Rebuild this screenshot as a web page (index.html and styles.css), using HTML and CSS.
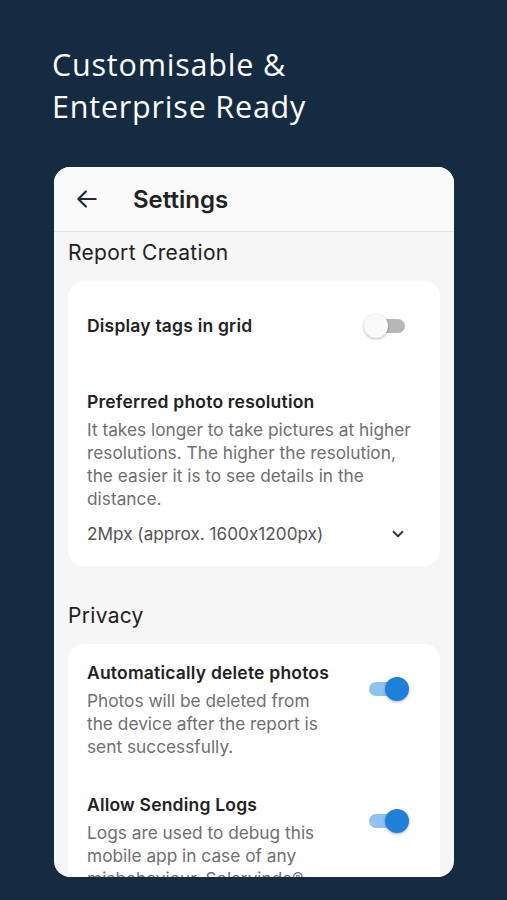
FILE: index.html
```html
<!DOCTYPE html>
<html>
<head>
<meta charset="utf-8">
<link rel="stylesheet" href="styles.css">
</head>
<body>
<div class="hero">
  <h1 class="hero-title">Customisable &amp;<br>Enterprise Ready</h1>
</div>
<div class="phone">
  <div class="appbar">
    <svg class="back" width="26" height="26" viewBox="0 0 24 24"><path d="M20 12H4.5M11 5l-7 7 7 7" fill="none" stroke="#1b2b3c" stroke-width="2" stroke-linecap="round" stroke-linejoin="round"/></svg>
    <span class="appbar-title">Settings</span>
  </div>
  <div class="content">
    <div class="section-title">Report Creation</div>
    <div class="card">
      <div class="row row-simple">
        <div class="row-text"><div class="item-title">Display tags in grid</div></div>
        <div class="switch off"><span class="track"></span><span class="thumb"></span></div>
      </div>
      <div class="row row-block">
        <div class="item-title">Preferred photo resolution</div>
        <div class="item-desc">It takes longer to take pictures at higher resolutions. The higher the resolution, the easier it is to see details in the distance.</div>
        <div class="select">
          <span>2Mpx (approx. 1600x1200px)</span>
          <svg width="18" height="18" viewBox="0 0 24 24"><path d="M6 9l6 6 6-6" fill="none" stroke="#333" stroke-width="2.4" stroke-linecap="round" stroke-linejoin="round"/></svg>
        </div>
      </div>
    </div>
    <div class="section-title section-gap">Privacy</div>
    <div class="card">
      <div class="row row-toggle">
        <div class="row-text">
          <div class="item-title">Automatically delete photos</div>
          <div class="item-desc narrow">Photos will be deleted from the device after the report is sent successfully.</div>
        </div>
        <div class="switch on"><span class="track"></span><span class="thumb"></span></div>
      </div>
      <div class="row row-toggle second">
        <div class="row-text">
          <div class="item-title">Allow Sending Logs</div>
          <div class="item-desc narrow">Logs are used to debug this mobile app in case of any misbehaviour. Solarvinda® uses them to improve the app.</div>
        </div>
        <div class="switch on"><span class="track"></span><span class="thumb"></span></div>
      </div>
    </div>
  </div>
</div>
</body>
</html>
```
FILE: styles.css
```css
html, body {
  margin: 0;
  padding: 0;
}
body {
  width: 507px;
  height: 900px;
  background: #142b42;
  overflow: hidden;
  font-family: Inter, "Open Sans", sans-serif;
  font-feature-settings: "calt" 0;
}
.hero {
  padding: 43px 0 0 52px;
}
.hero-title {
  margin: 0;
  color: #ffffff;
  font-family: "Open Sans", sans-serif;
  font-weight: 400;
  font-size: 30.5px;
  line-height: 42px;
  letter-spacing: 0.8px;
}
.phone {
  margin: 40px 0 0 54px;
  width: 400px;
  height: 710px;
  border-radius: 16px;
  overflow: hidden;
  background: #f6f6f6;
}
.appbar {
  height: 64px;
  background: #fafafa;
  border-bottom: 1px solid #e3e3e3;
  display: flex;
  align-items: center;
  padding-left: 20px;
}
.back {
  display: block;
}
.appbar-title {
  margin-left: 33px;
  font-size: 24px;
  font-weight: 600;
  color: #222;
}
.content {
  padding: 0 14px;
}
.section-title {
  font-size: 21px;
  letter-spacing: 0.3px;
  color: #222;
  padding-top: 7px;
  height: 42px;
  line-height: 28px;
}
.section-gap {
  padding-top: 36px;
}
.card {
  background: #ffffff;
  border-radius: 16px;
  padding: 0 19px;
}
.row {
  display: flex;
  align-items: center;
  justify-content: space-between;
}
.row-simple {
  height: 90px;
}
.row-block {
  display: block;
  padding: 19px 0 20px;
}
.item-title {
  font-size: 17.5px;
  letter-spacing: 0.2px;
  font-weight: 600;
  color: #222;
  line-height: 24px;
}
.item-desc {
  font-size: 17.3px;
  color: #6f6f6f;
  line-height: 23px;
  margin-top: 4px;
}
.narrow {
  width: 250px;
}
.select {
  margin-top: 12px;
  display: flex;
  align-items: center;
  justify-content: space-between;
  font-size: 17.2px;
  color: #555;
  line-height: 24px;
  padding-right: 14px;
}
.select svg {
  display: block;
}
.row-toggle {
  padding-top: 17px;
}
.row-toggle.second {
  padding-top: 35px;
}
.switch {
  position: relative;
  width: 40px;
  height: 26px;
  margin-right: 14px;
  flex: none;
}
.track {
  position: absolute;
  left: 2px;
  right: 2px;
  top: 6px;
  height: 14px;
  border-radius: 7px;
}
.thumb {
  position: absolute;
  top: 1px;
  width: 24px;
  height: 24px;
  border-radius: 50%;
  box-shadow: 0 1px 3px rgba(0,0,0,0.3);
}
.switch.off .track {
  background: #b7b7b7;
}
.switch.off .thumb {
  left: -3px;
  background: #fafafa;
}
.switch.on .track {
  background: #8fc3ef;
}
.switch.on .thumb {
  right: -2px;
  background: #1f80d9;
}
.row-toggle .switch {
  align-self: flex-start;
  margin-top: 15px;
}
```
